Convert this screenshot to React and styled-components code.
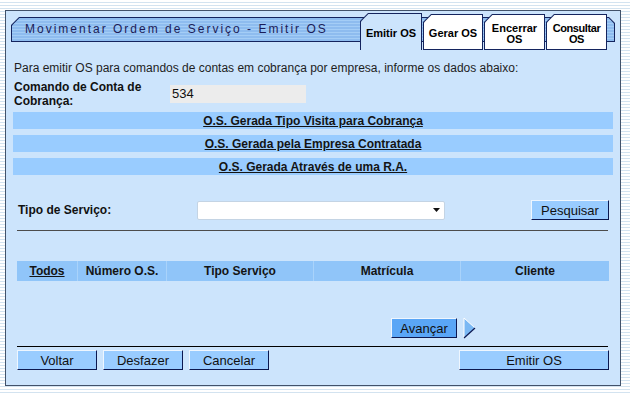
import React from 'react';
import styled, { createGlobalStyle } from 'styled-components';

const GlobalStyle = createGlobalStyle`
  html, body {
    margin: 0;
    padding: 0;
  }
  body {
    width: 630px;
    height: 394px;
    overflow: hidden;
    background: repeating-linear-gradient(to bottom, #ffffff 0 2px, #d3e3f0 2px 3px);
    font-family: 'Liberation Sans', Arial, sans-serif;
  }
`;

const PANEL_BG = '#cce4fc';
const NAVY = '#14245e';

const Panel = styled.div`
  box-sizing: border-box;
  margin: 10px 0 0 5px;
  width: 616px;
  height: 376px;
  border: 1px solid #42526a;
  background: ${PANEL_BG};
  display: flex;
  flex-direction: column;
`;

const Header = styled.div`
  position: relative;
  display: flex;
  align-items: flex-start;
  margin: 2px 5px 0 5px;
  height: 37px;

  &::before,
  &::after {
    content: '';
    position: absolute;
  }
  &::before {
    top: 4px;
    left: 0;
    right: 0;
    height: 25px;
    background: ${NAVY};
    clip-path: polygon(0 8px, 8px 0, calc(100% - 6px) 0, 100% 6px, 100% 100%, 0 100%);
  }
  &::after {
    top: 5px;
    left: 1px;
    right: 1px;
    height: 23px;
    background: repeating-linear-gradient(to bottom, #8ebcef 0 2px, #a4cdf6 2px 3px);
    clip-path: polygon(0 7.4px, 7.4px 0, calc(100% - 5.4px) 0, 100% 5.4px, 100% 100%, 0 100%);
  }
`;

const TitleText = styled.div`
  position: relative;
  z-index: 1;
  flex: 1;
  padding: 4px 0 0 14px;
  line-height: 25px;
  font-size: 12px;
  letter-spacing: 2px;
  color: #1c1c58;
  white-space: nowrap;
`;

const Tabs = styled.div`
  position: relative;
  z-index: 1;
  display: flex;
  align-items: flex-start;
  gap: 1px;
  margin-right: 8px;
`;

const Tab = styled.div`
  box-sizing: border-box;
  width: ${p => p.$w}px;
  height: ${p => (p.$active ? 37 : 36)}px;
  margin-top: ${p => (p.$active ? 0 : 1)}px;
  padding: 1px 1px ${p => (p.$active ? 0 : 1)}px 1px;
  background: ${NAVY};
  clip-path: polygon(0 8px, 8px 0, 100% 0, 100% 100%, 0 100%);
`;

const TabFace = styled.div`
  box-sizing: border-box;
  height: 100%;
  padding-top: 3px;
  background: ${p => (p.$active ? PANEL_BG : '#ffffff')};
  clip-path: polygon(0 7.4px, 7.4px 0, 100% 0, 100% 100%, 0 100%);
  display: flex;
  align-items: center;
  justify-content: center;
  text-align: center;
  font-size: 11px;
  font-weight: bold;
  line-height: 11px;
  letter-spacing: ${p => (p.$narrow ? '-0.4px' : '0')};
  color: #000;
`;

const Content = styled.div`
  display: flex;
  flex-direction: column;
  padding: 0 7px;
`;

const Intro = styled.div`
  margin-top: 11px;
  padding-left: 1px;
  font-size: 12px;
  line-height: 14px;
  color: #1e1e1e;
  white-space: nowrap;
`;

const FieldRow = styled.div`
  display: flex;
  align-items: flex-start;
  margin-top: 5px;
  padding-left: 1px;
`;

const Label = styled.div`
  width: ${p => p.$w}px;
  font-size: 12px;
  font-weight: bold;
  line-height: 14px;
  color: #111;
`;

const ReadInput = styled.div`
  box-sizing: border-box;
  margin-top: 5px;
  width: 136px;
  height: 18px;
  padding-left: 2px;
  background: #ececec;
  font-size: 13px;
  line-height: 18px;
  color: #111;
`;

const Bars = styled.div`
  display: flex;
  flex-direction: column;
  gap: 6px;
  margin-top: 4px;
`;

const LinkBar = styled.a`
  display: block;
  height: 17px;
  background: #99ccff;
  text-align: center;
  font-size: 12px;
  font-weight: bold;
  line-height: 18px;
  color: #141414;
  text-decoration: underline;
`;

const SearchRow = styled.div`
  display: flex;
  align-items: center;
  margin-top: 25px;
  padding: 0 4px 0 5px;
  height: 20px;
`;

const SelectBox = styled.div`
  box-sizing: border-box;
  width: 248px;
  height: 19px;
  background: #fff;
  border: 1px solid #c4d4e4;
  border-radius: 2px;
  display: flex;
  align-items: center;
  justify-content: flex-end;
  padding-right: 4px;
`;

const Button = styled.button`
  box-sizing: border-box;
  width: ${p => p.$w}px;
  height: 20px;
  margin: 0;
  padding: 0;
  background: ${p => (p.$strong ? '#5aa6f6' : '#99ccff')};
  border-style: solid;
  border-width: 1px;
  border-color: #eef6ff #0c1850 #0c1850 #eef6ff;
  font-family: 'Liberation Sans', Arial, sans-serif;
  font-size: 13px;
  color: #111;
  cursor: pointer;
`;

const Spacer = styled.div`
  flex: 1;
`;

const Rule = styled.div`
  height: 1px;
  margin: ${p => p.$mt}px 5px 0 4px;
  background: ${p => p.$dark ? '#000' : '#4c4c4c'};
`;

const TableHead = styled.div`
  display: grid;
  grid-template-columns: 60px 88px 146px 146px 148px;
  gap: 1px;
  margin: 30px 4px 0 4px;
  height: 20px;
  background: #a9d3fb;
`;

const HeadCell = styled.div`
  background: #90c5f9;
  text-align: center;
  font-size: 12px;
  font-weight: bold;
  line-height: 20px;
  color: #141414;
  text-decoration: ${p => (p.$link ? 'underline' : 'none')};
`;

const NextRow = styled.div`
  display: flex;
  align-items: center;
  justify-content: flex-end;
  gap: 6px;
  margin-top: 36px;
  padding-right: 137px;
  height: 22px;
`;

const ActionRow = styled.div`
  display: flex;
  gap: 6px;
  margin: 3px 4px 0 4px;
`;

const Arrow = () => (
  <svg width="13" height="22" viewBox="0 0 13 22">
    <path d="M1 1 L12 11 L1 21 Z" fill="#7ab8f4" />
    <path d="M1 21 L1 1 L12 11" fill="none" stroke="#ffffff" strokeWidth="1" />
    <path d="M12 11 L1 21" fill="none" stroke="#0c1850" strokeWidth="1.2" />
  </svg>
);

const tabs = [
  { label: 'Emitir OS', w: 62, active: true },
  { label: 'Gerar OS', w: 60 },
  { label: ['Encerrar', 'OS'], w: 61 },
  { label: ['Consultar', 'OS'], w: 61, narrow: true },
];

const bars = [
  'O.S. Gerada Tipo Visita para Cobrança',
  'O.S. Gerada pela Empresa Contratada',
  'O.S. Gerada Através de uma R.A.',
];

export default function App() {
  return (
    <>
      <GlobalStyle />
      <Panel>
        <Header>
          <TitleText>Movimentar Ordem de Serviço - Emitir OS</TitleText>
          <Tabs>
            {tabs.map((t, i) => (
              <Tab key={i} $w={t.w} $active={t.active}>
                <TabFace $active={t.active} $narrow={t.narrow}>
                  {Array.isArray(t.label) ? (
                    <span>
                      {t.label[0]}
                      <br />
                      {t.label[1]}
                    </span>
                  ) : (
                    t.label
                  )}
                </TabFace>
              </Tab>
            ))}
          </Tabs>
        </Header>

        <Content>
          <Intro>
            Para emitir OS para comandos de contas em cobrança por empresa, informe os dados abaixo:
          </Intro>
          <FieldRow>
            <Label $w={156}>
              Comando de Conta de
              <br />
              Cobrança:
            </Label>
            <ReadInput>534</ReadInput>
          </FieldRow>

          <Bars>
            {bars.map(b => (
              <LinkBar key={b} href="#">
                {b}
              </LinkBar>
            ))}
          </Bars>

          <SearchRow>
            <Label $w={179}>Tipo de Serviço:</Label>
            <SelectBox>
              <svg width="7" height="4" viewBox="0 0 7 4">
                <path d="M0 0 H7 L3.5 4 Z" fill="#111" />
              </svg>
            </SelectBox>
            <Spacer />
            <Button $w={78}>Pesquisar</Button>
          </SearchRow>

          <Rule $mt={10} />

          <TableHead>
            <HeadCell $link>Todos</HeadCell>
            <HeadCell>Número O.S.</HeadCell>
            <HeadCell>Tipo Serviço</HeadCell>
            <HeadCell>Matrícula</HeadCell>
            <HeadCell>Cliente</HeadCell>
          </TableHead>

          <NextRow>
            <Button $w={66} $strong>
              Avançar
            </Button>
            <Arrow />
          </NextRow>

          <Rule $mt={7} $dark />

          <ActionRow>
            <Button $w={80}>Voltar</Button>
            <Button $w={80}>Desfazer</Button>
            <Button $w={80}>Cancelar</Button>
            <Spacer />
            <Button $w={150}>Emitir OS</Button>
          </ActionRow>
        </Content>
      </Panel>
    </>
  );
}
